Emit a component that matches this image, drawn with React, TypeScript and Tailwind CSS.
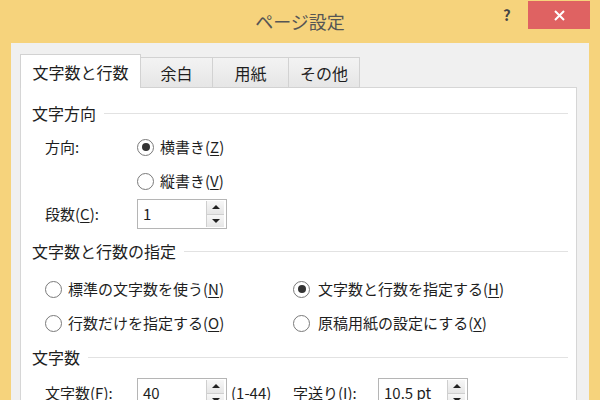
import React from "react"

const FONT = { fontFamily: '"Noto Sans CJK JP", "Noto Sans", sans-serif' }

function Key({ k }: { k: string }) {
  return (
    <>
      (<span className="underline underline-offset-2">{k}</span>)
    </>
  )
}

function Radio({ checked }: { checked?: boolean }) {
  return (
    <span className="w-[17px] h-[17px] rounded-full border border-[#7a7a7a] bg-white flex items-center justify-center shrink-0">
      {checked && <span className="w-[8px] h-[8px] rounded-full bg-[#333]" />}
    </span>
  )
}

function Spin({ value, w = "w-[90px]" }: { value: string; w?: string }) {
  return (
    <div className={`${w} h-[30px] border border-[#b5b5b5] bg-white flex items-stretch`}>
      <span className="flex-1 pl-[5px] text-[15px] leading-[28px] text-[#1e1e1e]">{value}</span>
      <div className="w-[18px] my-[1px] mr-[2px] flex flex-col border-l border-[#cfcfcf]">
        <span className="flex-1 flex items-center justify-center bg-gradient-to-b from-[#f7f7f7] to-[#e6e6e6] border-b border-[#cfcfcf]">
          <span className="w-0 h-0 border-l-[4px] border-r-[4px] border-b-[4px] border-l-transparent border-r-transparent border-b-[#222]" />
        </span>
        <span className="flex-1 flex items-center justify-center bg-gradient-to-b from-[#f7f7f7] to-[#e6e6e6]">
          <span className="w-0 h-0 border-l-[4px] border-r-[4px] border-t-[4px] border-l-transparent border-r-transparent border-t-[#222]" />
        </span>
      </div>
    </div>
  )
}

function Header({ title }: { title: string }) {
  return (
    <div className="flex items-center h-full pl-[11px] pr-[8px]">
      <span className="text-[16px] text-[#1e1e1e]">{title}</span>
      <span className="flex-1 h-px bg-[#e2e2e2] ml-[8px]" />
    </div>
  )
}

const TABS = ["文字数と行数", "余白", "用紙", "その他"]
const TAB_W = ["w-[121px]", "w-[72px]", "w-[76px]", "w-[71px]"]

export default function App() {
  return (
    <div className="w-[600px] h-[400px] bg-[#f6d37c] flex flex-col overflow-hidden text-[#1e1e1e]" style={FONT}>
      {/* Title bar */}
      <div className="h-[43px] relative flex items-start justify-center shrink-0">
        <span className="text-[18px] text-[#555] leading-[24px] mt-[9px]">ページ設定</span>
        <span className="absolute left-[503px] top-[4px] text-[15px] font-bold text-[#444]">?</span>
        <span className="absolute left-[528px] top-[1px] w-[62px] h-[28px] bg-[#df6262] flex items-center justify-center">
          <svg width="11" height="11" viewBox="0 0 11 11">
            <path d="M1 1 L10 10 M10 1 L1 10" stroke="white" strokeWidth="2" />
          </svg>
        </span>
      </div>

      {/* Body */}
      <div className="flex-1 mx-[11px] bg-[#f0f0f0] pl-[9px] pr-[12px] pt-[11px] flex flex-col">
        <div className="flex items-end h-[34px] relative z-10 -mb-px">
          {TABS.map((t, i) =>
            i === 0 ? (
              <div key={t} className={`${TAB_W[i]} h-[34px] bg-white border border-b-0 border-[#d2d2d2] flex items-center justify-center text-[16px]`}>
                {t}
              </div>
            ) : (
              <div key={t} className={`${TAB_W[i]} h-[31px] bg-gradient-to-b from-[#f3f3f3] to-[#e6e6e6] border border-l-0 border-[#d2d2d2] flex items-center justify-center text-[16px]`}>
                {t}
              </div>
            )
          )}
        </div>

        <div className="flex-1 bg-white border border-[#d6d6d6] pt-[8px] text-[15px]">
          <div className="h-[34px]"><Header title="文字方向" /></div>

          <div className="h-[34px] flex items-center pl-[24px]">
            <span className="w-[92px]">方向:</span>
            <Radio checked />
            <span className="ml-[6px]">横書き<Key k="Z" /></span>
          </div>

          <div className="h-[34px] flex items-center pl-[116px]">
            <Radio />
            <span className="ml-[6px]">縦書き<Key k="V" /></span>
          </div>

          <div className="h-[32px] flex items-center pl-[24px]">
            <span className="w-[92px]">段数<Key k="C" />:</span>
            <Spin value="1" />
          </div>

          <div className="h-[42px]"><Header title="文字数と行数の指定" /></div>

          <div className="h-[34px] flex items-center pl-[24px]">
            <div className="w-[248px] flex items-center">
              <Radio />
              <span className="ml-[6px]">標準の文字数を使う<Key k="N" /></span>
            </div>
            <Radio checked />
            <span className="ml-[8px]">文字数と行数を指定する<Key k="H" /></span>
          </div>

          <div className="h-[34px] flex items-center pl-[24px]">
            <div className="w-[248px] flex items-center">
              <Radio />
              <span className="ml-[6px]">行数だけを指定する<Key k="O" /></span>
            </div>
            <Radio />
            <span className="ml-[8px]">原稿用紙の設定にする<Key k="X" /></span>
          </div>

          <div className="h-[34px]"><Header title="文字数" /></div>

          <div className="h-[38px] flex items-center pl-[24px]">
            <span className="w-[92px]">文字数<Key k="F" />:</span>
            <Spin value="40" />
            <span className="ml-[4px] w-[62px]">(1-44)</span>
            <span className="w-[85px]">字送り<Key k="I" />:</span>
            <Spin value="10.5 pt" />
          </div>
        </div>
      </div>
    </div>
  )
}
